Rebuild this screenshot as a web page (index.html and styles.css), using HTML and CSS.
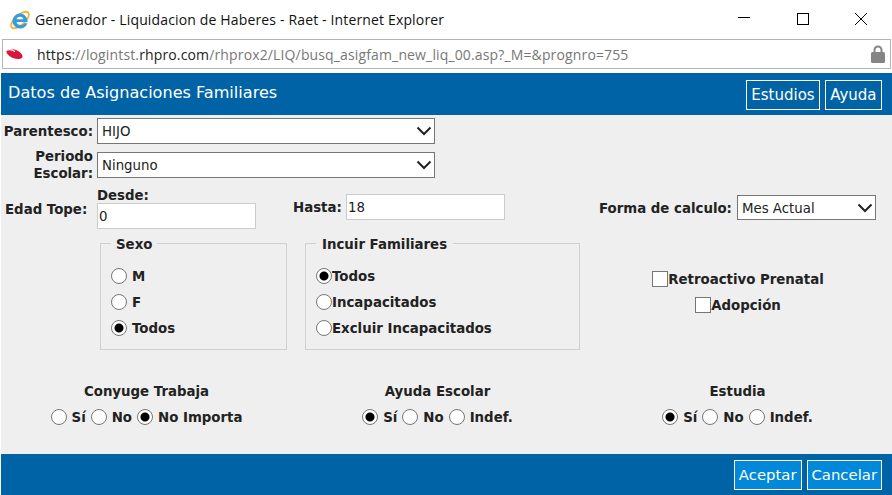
FILE: index.html
```html
<!DOCTYPE html>
<html>
<head>
    <title>Generador - Liquidacion de Haberes - Raet</title>
    <link rel="stylesheet" href="styles.css">
</head>
<body>
    <div class="titlebar">
        <svg class="ie-logo" width="20" height="20" viewBox="0 0 20 20">
            <ellipse cx="10" cy="10" rx="11" ry="5" transform="rotate(-42 10 10)" fill="none" stroke="#f2b632" stroke-width="1.800"/>
            <path d="M17.500 12H6.500c.3 3.500 6 4 8 1.200h3C16 17 13 18.500 10 18.500a7.500 7.500 0 1 1 7.500-7.500zM6.600 9.300h6.800C13 6 7 6 6.600 9.300z" fill="#3a9bdc" fill-rule="evenodd"/>
        </svg>
        <span class="window-title">Generador - Liquidacion de Haberes - Raet - Internet Explorer</span>
        <div class="window-buttons">
            <svg width="14" height="14" viewBox="0 0 14 14"><path d="M1 5.500h12" stroke="#000" fill="none"/></svg>
            <svg width="14" height="14" viewBox="0 0 14 14"><rect x="1.500" y="1.500" width="11" height="11" stroke="#000" fill="none"/></svg>
            <svg width="14" height="14" viewBox="0 0 14 14"><path d="M1 1l12 12M13 1L1 13" stroke="#000" fill="none"/></svg>
        </div>
    </div>
    <div class="addressbar">
        <svg class="site-logo" width="17" height="12" viewBox="0 0 17 12"><ellipse cx="8.500" cy="6" rx="8.500" ry="4.200" transform="rotate(22 8.500 6)" fill="#d8173a"/><path d="M0 2.500c3-1.500 6-1 9 1" stroke="#fff" stroke-width="1.200" fill="none"/></svg>
        <span class="url"><span class="dim-start">https</span>://logintst.<span class="host">rhpro.com</span>/rhprox2/LIQ/busq_asigfam_new_liq_00.asp?_M=&amp;prognro=755</span>
        <svg class="lock" width="14" height="18" viewBox="0 0 14 18"><path d="M3.500 8V5a3.500 3.500 0 0 1 7 0v3" fill="none" stroke="#858585" stroke-width="2"/><rect x="0" y="7" width="14" height="11" rx="1.500" fill="#858585"/></svg>
    </div>

    <div class="page">
        <div class="header">
            <h1>Datos de Asignaciones Familiares</h1>
            <div class="actions">
                <a class="btn">Estudios</a>
                <a class="btn btn-help">Ayuda</a>
            </div>
        </div>

        <div class="form">
            <div class="row row-parentesco">
                <label class="label">Parentesco:</label>
                <div class="select-box select-wide">
                    <select><option>HIJO</option></select>
                    <svg width="16" height="10" viewBox="0 0 16 10"><path d="M1.500 1.500L8 8l6.500-6.500" fill="none" stroke="#222" stroke-width="2"/></svg>
                </div>
            </div>
            <div class="row row-periodo">
                <label class="label">Periodo<br>Escolar:</label>
                <div class="select-box select-wide">
                    <select><option>Ninguno</option></select>
                    <svg width="16" height="10" viewBox="0 0 16 10"><path d="M1.500 1.500L8 8l6.500-6.500" fill="none" stroke="#222" stroke-width="2"/></svg>
                </div>
            </div>
            <div class="row row-edad">
                <label class="label edad-label">Edad Tope:</label>
                <div class="desde">
                    <label class="small-label">Desde:</label>
                    <input type="text" value="0">
                </div>
                <div class="hasta">
                    <label>Hasta:</label>
                    <input type="text" value="18">
                </div>
                <div class="forma">
                    <label>Forma de calculo:</label>
                    <div class="select-box select-small">
                        <select><option>Mes Actual</option></select>
                        <svg width="16" height="10" viewBox="0 0 16 10"><path d="M1.500 1.500L8 8l6.500-6.500" fill="none" stroke="#222" stroke-width="2"/></svg>
                    </div>
                </div>
            </div>

            <div class="row row-groups">
                <fieldset class="group group-sexo">
                    <legend>Sexo</legend>
                    <label class="option spaced"><input type="radio" name="sexo"> M</label>
                    <label class="option spaced"><input type="radio" name="sexo"> F</label>
                    <label class="option spaced"><input type="radio" name="sexo" checked> Todos</label>
                </fieldset>
                <fieldset class="group group-familiares">
                    <legend>Incuir Familiares</legend>
                    <label class="option"><input type="radio" name="fam" checked>Todos</label>
                    <label class="option"><input type="radio" name="fam">Incapacitados</label>
                    <label class="option"><input type="radio" name="fam">Excluir Incapacitados</label>
                </fieldset>
                <div class="checks">
                    <label class="option"><input type="checkbox">Retroactivo Prenatal</label>
                    <label class="option"><input type="checkbox">Adopción</label>
                </div>
            </div>

            <div class="row row-bottom">
                <div class="choice">
                    <div class="choice-title">Conyuge Trabaja</div>
                    <div class="choice-options">
                        <label class="option"><input type="radio" name="cony"> Sí</label>
                        <label class="option"><input type="radio" name="cony"> No</label>
                        <label class="option"><input type="radio" name="cony" checked> No Importa</label>
                    </div>
                </div>
                <div class="choice">
                    <div class="choice-title">Ayuda Escolar</div>
                    <div class="choice-options">
                        <label class="option"><input type="radio" name="ayuda" checked> Sí</label>
                        <label class="option"><input type="radio" name="ayuda"> No</label>
                        <label class="option"><input type="radio" name="ayuda"> Indef.</label>
                    </div>
                </div>
                <div class="choice">
                    <div class="choice-title">Estudia</div>
                    <div class="choice-options">
                        <label class="option"><input type="radio" name="est" checked> Sí</label>
                        <label class="option"><input type="radio" name="est"> No</label>
                        <label class="option"><input type="radio" name="est"> Indef.</label>
                    </div>
                </div>
            </div>
        </div>

        <div class="footer">
            <a class="btn btn-light">Aceptar</a>
            <a class="btn btn-light">Cancelar</a>
        </div>
    </div>
</body>
</html>
```

FILE: styles.css
```css
* { margin: 0; padding: 0; box-sizing: border-box; }
html, body { height: 495px; overflow: hidden; }
body { background: #fff; font-family: 'DejaVu Sans', Verdana, sans-serif; font-size: 13.33px; color: #222; display: flex; flex-direction: column; }

/* window chrome */
.titlebar { height: 39px; display: flex; align-items: center; padding-left: 10px; font-family: 'Open Sans', 'Noto Sans', sans-serif; }
.ie-logo { margin-right: 5px; flex-shrink: 0; }
.window-title { font-size: 14px; color: #111; letter-spacing: 0.15px; }
.window-buttons { margin-left: auto; margin-top: -1px; display: flex; gap: 44.5px; padding-right: 24px; }
.addressbar { height: 30px; margin: 0 1px 0 2px; border: 1px solid #b4b4b4; display: flex; align-items: center; padding-left: 3px; font-family: 'Open Sans', 'Noto Sans', sans-serif; font-size: 14px; color: #777; }
.site-logo { margin-right: 14px; }
.url { letter-spacing: 0.14px; }
.dim-start, .host { color: #222; }
.lock { margin-left: auto; margin-right: 5px; }

.page { margin: 4px 0 0 1px; flex: 1; background: #efefef; display: flex; flex-direction: column; }

.header { height: 42px; background: #0063a6; color: #fff; display: flex; align-items: center; justify-content: space-between; padding: 0 10px 0 7px; }
.header h1 { font-size: 16.1px; font-weight: normal; padding-bottom: 3px; }
.actions { display: flex; gap: 5px; margin-top: 1px; }
.btn { display: block; height: 30px; line-height: 28px; padding: 0 4px; border: 1px solid #fff; color: #fff; font-size: 15px; }
.btn-help { padding: 0 4.5px; }
.btn-light { background: #0288d8; font-size: 14.85px; }

.form { flex: 1; display: flex; flex-direction: column; font-weight: bold; }
.row { display: flex; }
.label { width: 92px; text-align: right; flex-shrink: 0; line-height: 17px; }
.row-parentesco { margin-top: 3px; height: 26px; align-items: center; }
.row-parentesco .label { padding-top: 1px; }
.row-periodo { margin-top: 8px; height: 26px; align-items: center; }

.select-box { position: relative; margin-left: 4px; font-weight: normal; }
.select-box select { display: block; width: 100%; height: 100%; appearance: none; background: #fff; border: 1px solid #767676; font: inherit; color: #222; padding-left: 4px; border-radius: 0; }
.select-box svg { position: absolute; right: 3px; top: 8px; }
.select-wide { width: 338px; height: 26px; }
.select-small { width: 139px; height: 25px; margin-left: 5px; }
.select-small select { padding-top: 2px; }

.row-edad { margin-top: 8px; height: 47px; }
.edad-label { width: 88px; margin-left: 4px; text-align: left; padding-top: 15px; }
.desde { margin-left: 4px; width: 159px; }
.small-label { display: block; line-height: 17px; height: 17px; padding-top: 1px; }
input[type=text] { display: block; width: 159px; height: 26px; border: 1px solid #ccc; background: #fff; font: inherit; font-weight: normal; color: #222; padding: 1px 1px 0; }
.hasta { margin-left: 37px; display: flex; align-items: flex-start; }
.hasta label { line-height: 26px; width: 53px; margin-top: 9px; }
.hasta input { margin-top: 8px; }
.forma { margin-left: 94px; display: flex; align-items: flex-start; padding-top: 9px; }
.forma label { line-height: 27px; }

.row-groups { height: 117px; }
.group { height: 117px; border: 1px solid #cfcfcf; padding: 10px 10px 0; }
.group legend { font-weight: bold; padding: 4px 6px 0; line-height: 16px; }
.group-sexo { margin-left: 99px; width: 187px; }
.group-sexo legend { padding: 4px 5px 0; }
.group-familiares { margin-left: 18px; width: 275px; }
.group .option { display: flex; height: 26px; align-items: center; }
.group .option.spaced input { margin-right: 5px; }

.option { display: inline-flex; align-items: center; white-space: nowrap; }
input[type=radio], input[type=checkbox] { appearance: none; width: 16px; height: 16px; background: #fff; border: 1px solid #767676; flex-shrink: 0; }
input[type=radio] { border-radius: 50%; }
input[type=radio]:checked { background: radial-gradient(circle, #000 0 4px, #fff 5px); }

.checks { margin-left: 73px; width: 170px; display: flex; flex-direction: column; align-items: center; padding-top: 38px; gap: 10px; }
.checks .option { height: 16px; }

.row-bottom { margin-top: 33px; }
.choice { display: flex; flex-direction: column; align-items: center; }
.choice:nth-child(1) { width: 291px; }
.choice:nth-child(2) { width: 291px; }
.choice:nth-child(3) { width: 309px; }
.choice-title { line-height: 17px; }
.choice-options { display: flex; gap: 5px; margin-top: 9px; }
.choice-options input { margin-right: 5px; }

.footer { height: 41px; background: #0063a6; display: flex; justify-content: flex-end; align-items: center; gap: 5px; padding: 1px 10px 0 0; }
```
